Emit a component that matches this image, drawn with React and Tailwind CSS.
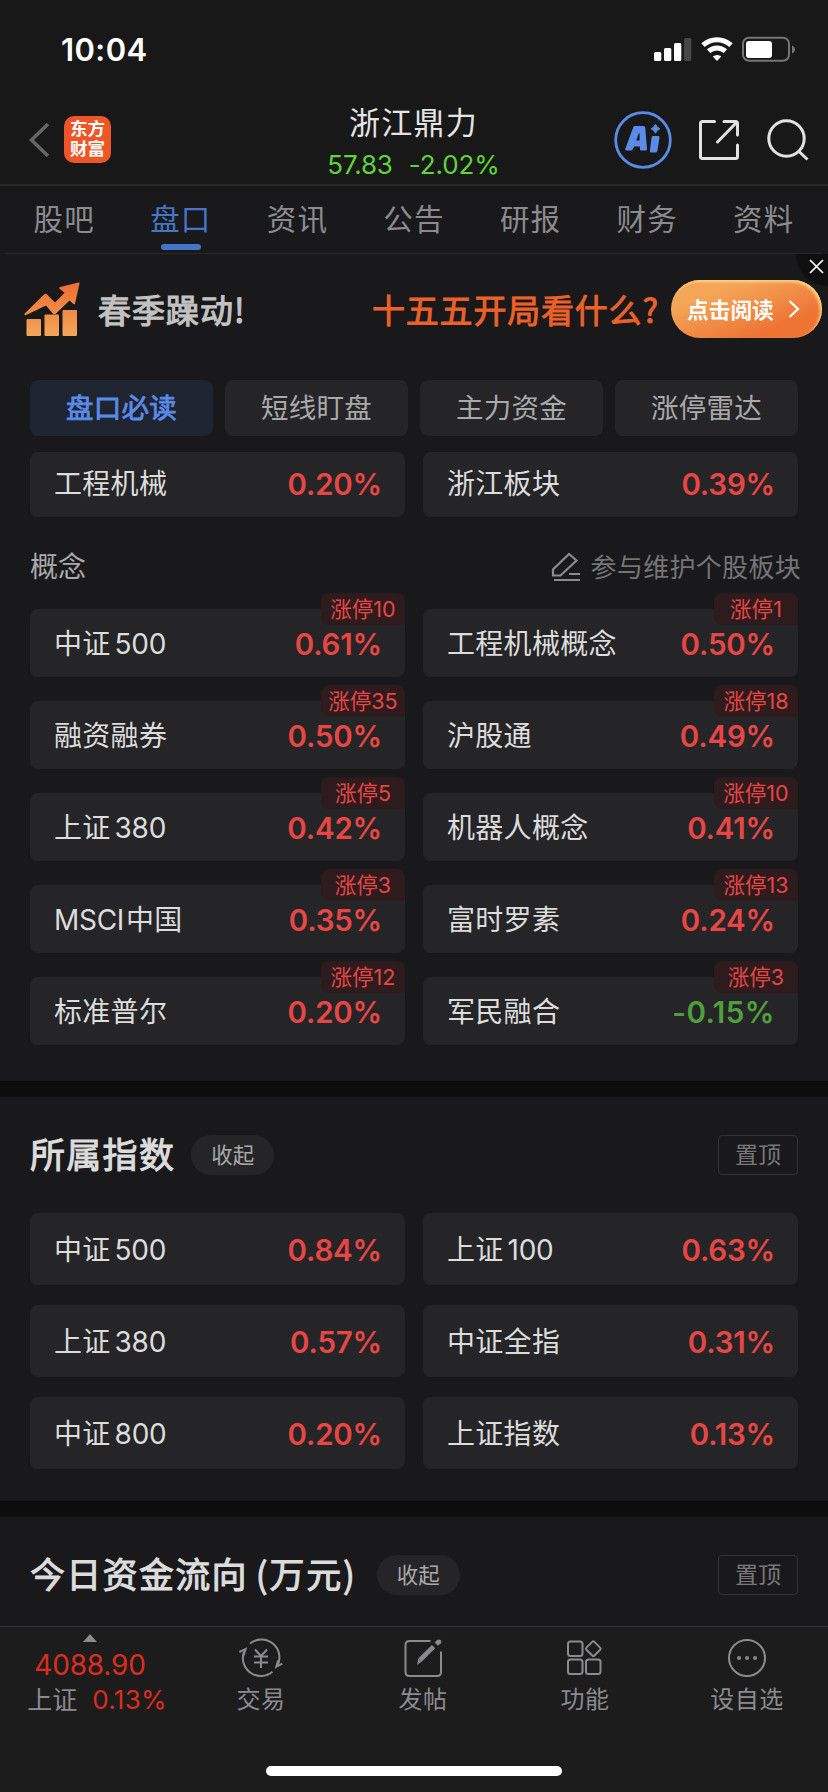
import React from 'react';

const tabs = ['股吧', '盘口', '资讯', '公告', '研报', '财务', '资料'];
const filters = ['盘口必读', '短线盯盘', '主力资金', '涨停雷达'];

const sectors = [
  { name: '工程机械', change: '0.20%' },
  { name: '浙江板块', change: '0.39%' },
];

const concepts = [
  { name: '中证500', change: '0.61%', limitUp: 10 },
  { name: '工程机械概念', change: '0.50%', limitUp: 1 },
  { name: '融资融券', change: '0.50%', limitUp: 35 },
  { name: '沪股通', change: '0.49%', limitUp: 18 },
  { name: '上证380', change: '0.42%', limitUp: 5 },
  { name: '机器人概念', change: '0.41%', limitUp: 10 },
  { name: 'MSCI中国', change: '0.35%', limitUp: 3 },
  { name: '富时罗素', change: '0.24%', limitUp: 13 },
  { name: '标准普尔', change: '0.20%', limitUp: 12 },
  { name: '军民融合', change: '-0.15%', limitUp: 3 },
];

const indexes = [
  { name: '中证500', change: '0.84%' },
  { name: '上证100', change: '0.63%' },
  { name: '上证380', change: '0.57%' },
  { name: '中证全指', change: '0.31%' },
  { name: '中证800', change: '0.20%' },
  { name: '上证指数', change: '0.13%' },
];

const StatusBar = () => (
  <div className="flex h-[94px] items-start justify-between pl-[61px] pr-[32px] pt-[36px]">
    <span className="text-[31px] font-semibold leading-[28px] tracking-[0.4px] text-white">10:04</span>
    <div className="flex items-center gap-[9px]">
      <svg width="38" height="26" viewBox="0 0 38 26" fill="#fff">
        <rect x="0" y="16" width="7.3" height="9" rx="1.5" />
        <rect x="10" y="12" width="7.3" height="13" rx="1.5" />
        <rect x="20" y="7" width="7.3" height="18" rx="1.5" />
        <rect x="30" y="2" width="7.3" height="23" rx="1.5" fill="#474747" />
      </svg>
      <svg width="32" height="26" viewBox="0 0 32 26" fill="none" stroke="#fff" strokeWidth="5">
        <path d="M2 9.2C10 1.8 22 1.8 30 9.2" />
        <path d="M7.6 15.2c5-4.4 11.8-4.4 16.8 0" />
        <path d="M11.8 20.5c2.6-2 5.8-2 8.4 0L16 25z" fill="#fff" stroke="none" />
      </svg>
      <svg width="54" height="26" viewBox="0 0 54 26">
        <rect x="1" y="1.8" width="46" height="23" rx="6" fill="none" stroke="#757575" strokeWidth="2" />
        <rect x="4" y="5" width="26" height="17" rx="3" fill="#fff" />
        <path d="M50 9.5c4 1.5 4 6.5 0 8z" fill="#757575" />
      </svg>
    </div>
  </div>
);

const Header = () => (
  <div className="flex h-[92px] items-start justify-between border-b-2 border-[#282829] pl-[28px] pr-[19px]">
    <div className="flex w-[250px] items-center gap-[15px] pt-[22px]">
      <svg width="21" height="36" viewBox="0 0 21 36" fill="none" stroke="#666" strokeWidth="3.6">
        <path d="M20 2 3.5 18 20 34" />
      </svg>
      <div className="flex h-[47px] w-[47px] flex-col items-center justify-center rounded-[10px] bg-[#ee5628] pb-px text-[17.5px] font-bold leading-[20px] text-white">
        <span>东方</span>
        <span>财富</span>
      </div>
    </div>
    <div className="flex flex-col items-center">
      <h1 className="mt-[9px] text-[31px] leading-[40px] tracking-[1.2px] text-[#e4e4e4]">浙江鼎力</h1>
      <div className="mt-[6px] flex gap-[16px] text-[26px] leading-[32px] text-[#5fd43a]">
        <span className="tracking-[-0.2px]">57.83</span>
        <span className="tracking-[-0.1px]">-2.02%</span>
      </div>
    </div>
    <div className="flex w-[260px] items-center justify-end pt-[17px]">
      <svg width="58" height="58" viewBox="0 0 58 58" fill="#5b8be8">
        <circle cx="29" cy="29" r="27.3" fill="none" stroke="#5b8be8" strokeWidth="2.8" />
        <path fillRule="evenodd" d="M20.500 15h9q1.500 0 1.700 1.500l1.800 21.500q.1 1.500-1.400 1.500h-4.200q-1.400 0-1.500-1.500v-2.500h-5.800l-1.300 2.800q-.6 1.200-2 1.200h-4.300q-2 0-1.200-1.800l8-21.500q.4-1.200 1.200-1.200zM24.800 22.500l-2.600 7h3.400V22.500z" />
        <path d="M38.8 25h5.4q1.500 0 1.300 1.400l-2.200 13.600q-.2 1.500-1.700 1.500h-4.400q-1.500 0-1.300-1.500l1.700-13.600q.1-1.400 1.200-1.400z" />
        <path d="M41.500 13.300q1.300 3.100 4.500 4.500-3.200 1.400-4.500 4.500-1.300-3.100-4.500-4.500 3.200-1.400 4.500-4.500z" stroke="#5b8be8" strokeWidth=".8" />
      </svg>
      <svg className="ml-[26px]" width="42" height="42" viewBox="0 0 42 42" fill="none" stroke="#e2e2e2" strokeWidth="3">
        <path d="M16.5 2.5H4.5q-2 0-2 2v33q0 2 2 2h33q2 0 2-2V26M26 2.5h11.5q2 0 2 2V16M38.500 3.500 19.500 23" strokeLinecap="round" />
      </svg>
      <svg className="ml-[27px]" width="42" height="42" viewBox="0 0 42 42" fill="none" stroke="#e2e2e2" strokeWidth="3">
        <circle cx="19.5" cy="19.5" r="17.7" />
        <path d="m32 32.5 8.500 8" />
      </svg>
    </div>
  </div>
);

const Tabs = () => (
  <div className="mx-[6px] flex h-[68px] border-b border-[#29292b]">
    {tabs.map((tab) => (
      <div key={tab} className="flex flex-1 flex-col items-center">
        <span className={`mt-[13px] text-[29.5px] leading-[40px] tracking-[1.2px] ${tab === '盘口' ? 'text-[#4375c8]' : 'text-[#8b8b8f]'}`}>
          {tab}
        </span>
        {tab === '盘口' && <span className="mt-[5px] h-[6px] w-[40px] rounded-full bg-[#4375c8]" />}
      </div>
    ))}
  </div>
);

const Banner = () => (
  <div className="relative flex h-[126px] items-start pl-[24px] pt-[26px] font-['Noto_Sans_CJK_SC',sans-serif]">
    <svg className="mt-[2px]" width="56" height="55" viewBox="0 0 56 55" fill="url(#rise)">
      <defs>
        <linearGradient id="rise" gradientUnits="userSpaceOnUse" x1="0" y1="0" x2="0" y2="54">
          <stop offset="0" stopColor="#ee6c33" />
          <stop offset="1" stopColor="#f4a658" />
        </linearGradient>
      </defs>
      <rect x="2.5" y="37" width="14.5" height="17" rx="1" />
      <rect x="20.5" y="32.5" width="14.5" height="21.5" rx="1" />
      <rect x="38.5" y="28" width="14.5" height="26" rx="1" />
      <path d="M54.500.5q1.200-.3 1 1L51 21.500q-.4 1.500-1.500.4l-4-3.500L32 31.500q-1.500 1.500-3 .2l-7-8.200L2 33q-2 .8-1.500-1.200L20 12.500q1.500-1.500 3 0l8 8 9.500-9.800-5-4q-1-1.200.5-1.700z" />
    </svg>
    <span className="ml-[18px] mt-[6px] text-[33px] leading-[46px] tracking-[1px] text-[#c2c2c2] [-webkit-text-stroke:1.1px_#c2c2c2]">春季躁动!</span>
    <span className="absolute left-[372px] top-[32px] whitespace-nowrap text-[33px] leading-[46px] tracking-[0.8px] text-[#ec6127] [-webkit-text-stroke:0.9px_#ec6127]">十五五开局看什么?</span>
    <div className="absolute left-[671px] top-[26px] flex h-[58px] w-[151px] items-center rounded-full bg-linear-to-br from-[#f4a658] from-25% to-[#ee7434] to-75% pl-[16px] shadow-[inset_-2px_2px_3px_#fbd581]">
      <span className="text-[21.7px] font-bold leading-[30px] text-white">点击阅读</span>
      <svg className="ml-[14px]" width="12" height="20" viewBox="0 0 12 20" fill="none" stroke="#fff" strokeWidth="2.2">
        <path d="m1.500 2 8.500 8-8.500 8" />
      </svg>
    </div>
    <div className="absolute right-0 top-0 h-[32px] w-[32px] rounded-bl-full bg-[#0f0f10]">
      <svg className="absolute left-[13px] top-[5px]" width="15" height="15" viewBox="0 0 15 15" stroke="#fff" strokeWidth="1.7">
        <path d="m1 1 13 13M14 1 1 14" />
      </svg>
    </div>
  </div>
);

// latin runs get a little air next to the hanzi
const Label = ({ text }) => (
  <span className="flex text-[28px] leading-[40px] text-[#dcdcdc]">
    {text.match(/[A-Z0-9]+|[^A-Z0-9]+/g).map((part, i) => (
      /[A-Z0-9]/.test(part)
        ? <span key={i} className={i ? 'ml-[4px] tracking-[-0.3px]' : 'mr-[2px] tracking-[-0.3px]'}>{part}</span>
        : <span key={i} className="tracking-[0.3px]">{part}</span>
    ))}
  </span>
);

const Card = ({ item, className }) => (
  <div className={`relative flex items-center justify-between rounded-[8px] bg-[#252527] pl-[24px] pr-[23px] ${className}`}>
    <Label text={item.name} />
    <span className={`text-[29.5px] font-semibold leading-[40px] ${item.change.startsWith('-') ? 'tracking-[0.5px] text-[#4fa03c]' : 'tracking-[-0.2px] text-[#e84545]'}`}>
      {item.change}
    </span>
    {item.limitUp && (
      <span className="absolute -top-[16px] right-0 flex h-[32px] w-[84px] items-center justify-center rounded-[8px] rounded-br-[4px] bg-[#2e1b1d] text-[21.5px] leading-[32px] text-[#e84545]">
        涨停{item.limitUp}
      </span>
    )}
  </div>
);

const SectionHeader = ({ title, unit, className }) => (
  <div className="flex h-[40px] items-center px-[30px]">
    <h2 className="-mt-[4px] flex font-['Noto_Sans_CJK_SC',sans-serif] text-[35px] leading-[40px] tracking-[1.3px] text-[#dcdcdc] [-webkit-text-stroke:1px_#dcdcdc]">
      <span>{title}</span>
      {unit && <span className="ml-[8px] tracking-[1.8px]">({unit})</span>}
    </h2>
    <span className={`flex h-[40px] w-[83px] items-center justify-center rounded-full bg-[#252527] text-[21.5px] text-[#a9a9aa] ${className}`}>收起</span>
    <span className="ml-auto flex h-[40px] w-[80px] items-center justify-center rounded-[4px] border border-[#323234] text-[23px] text-[#78787a]">置顶</span>
  </div>
);

const NavItem = ({ label, children }) => (
  <div className="flex flex-1 flex-col items-center pt-[10px]">
    <svg width="46" height="42" viewBox="0 0 46 42" fill="none" stroke="#8b8b8f" strokeWidth="2">
      {children}
    </svg>
    <span className="mt-[4px] text-[24px] leading-[34px] tracking-[0.5px] text-[#8b8b8f]">{label}</span>
  </div>
);

const BottomBar = () => (
  <div className="h-[166px] border-t border-[#353536] bg-[#1c1c1c]">
    <div className="flex h-[139px]">
      <div className="flex w-[180px] flex-col items-center pt-[7px]">
        <svg width="14" height="8" viewBox="0 0 14 8" fill="#8b8b8f">
          <path d="M7 0l7 8H0z" />
        </svg>
        <span className="mt-[5px] text-[28px] leading-[36px] tracking-[-0.2px] text-[#dd2c1f]">4088.90</span>
        <div className="mt-[-1px] flex items-center gap-[15px] pl-[14px] text-[25px] leading-[36px]">
          <span className="text-[#8b8b8f]">上证</span>
          <span className="text-[26px] tracking-[0.3px] text-[#dd2c1f]">0.13%</span>
        </div>
      </div>
      <NavItem label="交易">
        <path d="M12 6.6A18 18 0 0 1 39.3 29M34.5 34.8A18 18 0 0 1 6 14.8" />
        <path d="M1.3 15 7.600 12.200 5.300 19M44.300 26.600l-6 3.200 1.900-6.500" />
        <path d="m17 12.500 6 6.500 6-6.500M16 19.500h14M16 25.500h14M23 19v12" />
      </NavItem>
      <NavItem label="发帖">
        <path d="M30.500 4H9.500q-4 0-4 4v27q0 4 4 4h27.500q4 0 4-4V14.500" />
        <path d="M20 23 33.500 9.700" strokeWidth="4.6" />
        <path d="m17 28 1.300-6.600 3.500 3.200z" fill="#8b8b8f" stroke="none" />
        <path d="m36.300 7.200 2.500-2.500" strokeWidth="4.6" />
        <circle cx="38.9" cy="5" r="2.4" fill="#8b8b8f" stroke="none" />
      </NavItem>
      <NavItem label="功能">
        <rect x="6" y="4.5" width="14.5" height="14.5" rx="2.5" />
        <rect x="6" y="22.5" width="14.5" height="14.5" rx="2.5" />
        <rect x="24" y="22.5" width="14.5" height="14.5" rx="2.5" />
        <rect x="25.7" y="6.1" width="11.2" height="11.2" rx="1.5" transform="rotate(45 31.3 11.7)" />
      </NavItem>
      <NavItem label="设自选">
        <circle cx="23" cy="21" r="18" />
        <g fill="#8b8b8f" stroke="none">
          <circle cx="15" cy="21" r="2" />
          <circle cx="23" cy="21" r="2" />
          <circle cx="31" cy="21" r="2" />
        </g>
      </NavItem>
    </div>
    <div className="mx-auto h-[10px] w-[296px] rounded-full bg-white" />
  </div>
);

const App = () => {
  return (
    <div className="flex h-[1792px] w-[828px] flex-col overflow-hidden bg-[#19191b] font-['Inter','Noto_Sans_CJK_SC',sans-serif]">
      <div className="bg-[#181818]">
        <StatusBar />
        <Header />
      </div>
      <Tabs />
      <Banner />

      <div className="grid grid-cols-4 gap-[12px] px-[30px]">
        {filters.map((name, i) => (
          <div key={name} className={`flex h-[56px] items-center justify-center rounded-[8px] pt-px text-[27.5px] tracking-[0.3px] ${i === 0 ? 'bg-[#1e2430] text-[#5b8be8] [-webkit-text-stroke:0.8px_#5b8be8]' : 'bg-[#252527] text-[#a9a9aa]'}`}>
            {name}
          </div>
        ))}
      </div>

      <div className="mt-[16px] grid grid-cols-2 gap-x-[18px] px-[30px]">
        {sectors.map((item) => <Card key={item.name} item={item} className="h-[65px] pb-[2px]" />)}
      </div>

      <div className="flex h-[92px] items-center justify-between pl-[30px] pr-[27px] pt-[8px]">
        <span className="text-[28px] text-[#a9a9aa]">概念</span>
        <span className="flex items-center text-[26px] tracking-[0.3px] text-[#757577]">
          <svg className="mr-[10px]" width="30" height="30" viewBox="0 0 30 30" fill="none" stroke="#8b8b8f" strokeWidth="2.2">
            <path d="M2 23.500v-6L18 2l7.500 6.500L9.500 23.500zM18 22h11M3 28h26" />
          </svg>
          参与维护个股板块
        </span>
      </div>

      <div className="grid grid-cols-2 gap-x-[18px] gap-y-[24px] px-[30px]">
        {concepts.map((item) => <Card key={item.name} item={item} className="h-[68px] pt-px" />)}
      </div>

      <div className="mb-[38px] mt-[36px] h-[16px] shrink-0 bg-[#0d0d0d]" />
      <SectionHeader title="所属指数" className="ml-[16px]" />
      <div className="mt-[38px] grid grid-cols-2 gap-x-[18px] gap-y-[20px] px-[30px]">
        {indexes.map((item) => <Card key={item.name} item={item} className="h-[72px] pt-px" />)}
      </div>

      <div className="mb-[38px] mt-[32px] h-[16px] shrink-0 bg-[#0d0d0d]" />
      <SectionHeader title="今日资金流向" unit="万元" className="ml-[20px]" />
      <div className="mt-auto">
        <BottomBar />
      </div>
    </div>
  );
};

export default App;
